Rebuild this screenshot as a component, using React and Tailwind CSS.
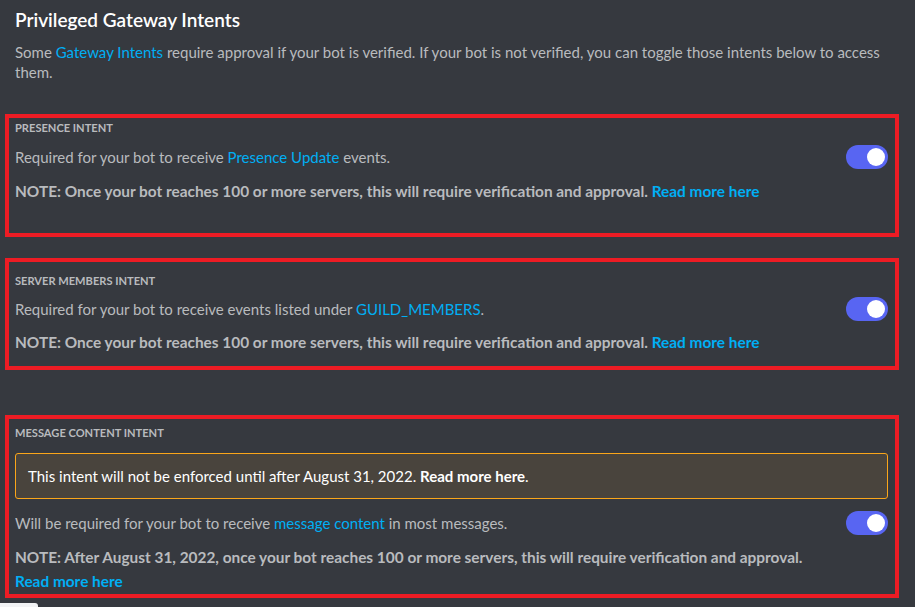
import React from 'react';

const Link = ({ children, bold }) => (
  <span className={bold ? 'text-[#00aff4] font-bold' : 'text-[#00aff4]'}>{children}</span>
);

const Toggle = () => (
  <div className="w-[42px] h-[24px] rounded-full bg-[#5865f2] flex items-center justify-end px-[3px] shrink-0">
    <div className="w-[18px] h-[18px] rounded-full bg-white" />
  </div>
);

const Label = ({ children }) => (
  <div className="text-[11.1px] leading-[16px] font-bold uppercase text-[#b9bbbe]">{children}</div>
);

const Row = ({ children }) => (
  <div className="flex items-center justify-between h-[24px]">
    <div className="text-[15px] leading-[20px] text-[#b9bbbe]">{children}</div>
    <Toggle />
  </div>
);

const Note = ({ children }) => (
  <div className="text-[15.4px] leading-[20px] font-bold text-[#b9bbbe]">{children}</div>
);

const App = () => {
  return (
    <div
      className="w-[915px] h-[607px] bg-[#36393f] overflow-hidden relative flex flex-col"
      style={{ fontFamily: '"Lato", "Liberation Sans", sans-serif' }}
    >
      <div className="px-[15px] pt-[8px]">
        <h1 className="text-[19px] leading-[24px] font-semibold text-white">Privileged Gateway Intents</h1>
        <p className="mt-[10px] text-[15px] leading-[20px] text-[#b9bbbe]">
          Some <Link>Gateway Intents</Link> require approval if your bot is verified. If your bot is not verified, you can toggle those intents below to access them.
        </p>
      </div>

      {/* presence */}
      <div className="mt-[32px] ml-[5px] w-[894px] h-[123px] border-4 border-[#ed1c24] pl-[6px] pr-[7px] pt-[2px]">
        <Label>Presence Intent</Label>
        <div className="mt-[9px]">
          <Row>
            Required for your bot to receive <Link>Presence Update</Link> events.
          </Row>
        </div>
        <div className="mt-[12px]">
          <Note>
            NOTE: Once your bot reaches 100 or more servers, this will require verification and approval. <Link bold>Read more here</Link>
          </Note>
        </div>
      </div>

      {/* server members */}
      <div className="mt-[21px] ml-[5px] w-[894px] h-[112px] border-4 border-[#ed1c24] pl-[6px] pr-[7px] pt-[11px]">
        <Label>Server Members Intent</Label>
        <div className="mt-[8px]">
          <Row>
            Required for your bot to receive events listed under <Link>GUILD_MEMBERS</Link>.
          </Row>
        </div>
        <div className="mt-[11px]">
          <Note>
            NOTE: Once your bot reaches 100 or more servers, this will require verification and approval. <Link bold>Read more here</Link>
          </Note>
        </div>
      </div>

      {/* message content */}
      <div className="mt-[45px] ml-[5px] w-[894px] h-[183px] border-4 border-[#ed1c24] pl-[6px] pr-[7px] pt-[6px]">
        <Label>Message Content Intent</Label>
        <div className="mt-[12px] h-[46px] rounded-[3px] border border-[#faa61a] bg-[#49443d] px-[12px] flex items-center text-[15px] text-white">
          <span>
            This intent will not be enforced until after August 31, 2022. <span className="font-bold">Read more here</span>.
          </span>
        </div>
        <div className="mt-[12px]">
          <Row>
            Will be required for your bot to receive <Link>message content</Link> in most messages.
          </Row>
        </div>
        <div className="mt-[10px] text-[15.4px] leading-[24px] font-bold text-[#b9bbbe]">
          NOTE: After August 31, 2022, once your bot reaches 100 or more servers, this will require verification and approval.
          <br />
          <Link bold>Read more here</Link>
        </div>
      </div>

      <div className="absolute left-0 bottom-0 w-[38px] h-[4px] bg-[#f2f3f5] rounded-tr-[3px]" />
    </div>
  );
};

export default App;
